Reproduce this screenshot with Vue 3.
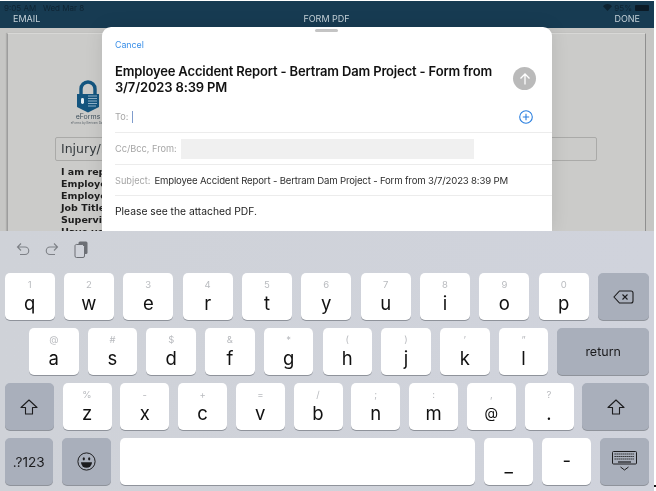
<script setup>
const rows = [
  {
    cls: 'row-one',
    keys: [
      { w: 50, hint: '1', label: 'q' }, { w: 50, hint: '2', label: 'w' }, { w: 50, hint: '3', label: 'e' },
      { w: 50, hint: '4', label: 'r' }, { w: 50, hint: '5', label: 't' }, { w: 50, hint: '6', label: 'y' },
      { w: 50, hint: '7', label: 'u' }, { w: 50, hint: '8', label: 'i' }, { w: 50, hint: '9', label: 'o' },
      { w: 50, hint: '0', label: 'p' }, { w: 51, icon: 'delete' }
    ]
  },
  {
    cls: 'row-two',
    keys: [
      { w: 49.5, hint: '@', label: 'a' }, { w: 49.5, hint: '#', label: 's' }, { w: 49.5, hint: '$', label: 'd' },
      { w: 49.5, hint: '&', label: 'f' }, { w: 49.5, hint: '*', label: 'g' }, { w: 49.5, hint: '(', label: 'h' },
      { w: 49.5, hint: ')', label: 'j' }, { w: 49.5, hint: '’', label: 'k' }, { w: 49.5, hint: '”', label: 'l' },
      { w: 91.4, text: 'return' }
    ]
  },
  {
    cls: 'row-three',
    keys: [
      { w: 49.2, icon: 'shift' }, { w: 49, hint: '%', label: 'z' }, { w: 49, hint: '-', label: 'x' },
      { w: 49, hint: '+', label: 'c' }, { w: 49, hint: '=', label: 'v' }, { w: 49, hint: '/', label: 'b' },
      { w: 49, hint: ';', label: 'n' }, { w: 49, hint: ':', label: 'm' }, { w: 49, hint: ',', label: '@', small: true },
      { w: 49, hint: '?', label: '.' }, { w: 67, icon: 'shift' }
    ]
  },
  {
    cls: 'row-four',
    keys: [
      { w: 48.4, text: '.?123', wide: true }, { w: 49, icon: 'emoji' }, { w: 355, blank: true },
      { w: 49.4, label: '_', low: true }, { w: 49, label: '-', mid: true }, { w: 49, icon: 'keyboard' }
    ]
  }
]
const docLines = ['I am reporting', 'Employee Name:', 'Employee ID:', 'Job Title:', 'Supervisor:', 'Have you']
</script>

<template>
  <div class="app">
    <div class="screen">
      <header class="topbar">
        <div class="status">
          <span class="status-left">9:05 AM&nbsp;&nbsp;&nbsp;Wed Mar 8</span>
          <span class="status-right">
            <svg width="9" height="7" viewBox="0 0 18 14"><path d="M9 14 0 4.5C5-1.2 13-1.2 18 4.5Z" fill="#0d2231"/></svg>
            <span>95%</span>
            <span class="battery"></span>
          </span>
        </div>
        <nav class="nav">
          <span>EMAIL</span>
          <span class="nav-title">FORM PDF</span>
          <span class="nav-done">DONE</span>
        </nav>
      </header>

      <main class="doc">
        <div class="page">
          <div class="logo">
            <svg width="24" height="33" viewBox="0 0 24 33">
              <path d="M5 14V9a7 7 0 0 1 14 0v5" fill="none" stroke="#14557f" stroke-width="3.4"/>
              <path d="M1 14h22v13l-11 5.5L1 27Z" fill="#14557f"/>
              <rect x="5" y="18" width="3" height="6" rx="1.4" fill="#e3edf3"/>
              <path d="M12 16h9M12 18.500h9M12 21h9M12 23.500h9M12 26h8" stroke="#8fb2c9" stroke-width="1"/>
            </svg>
            <span class="logo-name">eForms</span>
            <span class="logo-tag">eForms by Bertram Dam</span>
          </div>
          <div class="field">Injury/Near Miss</div>
          <div class="doc-lines">
            <div v-for="line in docLines" :key="line">{{ line }}</div>
          </div>
        </div>
      </main>

      <section class="keyboard">
        <div class="tools">
          <svg width="14" height="14" viewBox="0 0 14 14" fill="none" stroke="#7d8086" stroke-width="1.1">
            <path d="M5 1.500 1.500 5 5 8.500M1.500 5H9a3.700 3.700 0 0 1 0 7.500H4"/>
          </svg>
          <svg width="14" height="14" viewBox="0 0 14 14" fill="none" stroke="#7d8086" stroke-width="1.1">
            <path d="M9 1.500 12.500 5 9 8.500M12.500 5H5a3.700 3.700 0 0 0 0 7.500h5"/>
          </svg>
          <svg width="14" height="17" viewBox="0 0 14 17" fill="none">
            <rect x="4.500" y="0.500" width="9" height="12.500" rx="1.500" fill="#6c6f75"/>
            <path d="M3 3.500h5.500l2 2V15a1.500 1.500 0 0 1-1.500 1.500H2.500A1.500 1.500 0 0 1 1 15V5a1.500 1.500 0 0 1 2-1.500Z" fill="#d0d3da" stroke="#6c6f75" stroke-width="1"/>
          </svg>
        </div>
        <div v-for="row in rows" :key="row.cls" class="kb-row" :class="row.cls">
          <div
            v-for="(key, i) in row.keys"
            :key="i"
            class="key"
            :class="{ dark: key.icon || key.text }"
            :style="{ width: key.w + 'px' }"
          >
            <template v-if="key.label">
              <span class="hint">{{ key.hint }}</span>
              <span class="letter" :class="{ small: key.small, low: key.low, mid: key.mid }">{{ key.label }}</span>
            </template>
            <span v-else-if="key.text" class="key-text" :class="{ wide: key.wide }">{{ key.text }}</span>
            <svg v-else-if="key.icon === 'delete'" width="21" height="14" viewBox="0 0 21 14" fill="none" stroke="#1c1c1e" stroke-width="1.100">
              <path d="M6.500 1H18a2 2 0 0 1 2 2v8a2 2 0 0 1-2 2H6.500L1 7Z"/>
              <path d="m9.500 4.500 5 5m0-5-5 5"/>
            </svg>
            <svg v-else-if="key.icon === 'shift'" width="18" height="16" viewBox="0 0 18 16" fill="none" stroke="#1c1c1e" stroke-width="1.100">
              <path d="M9 1 1 8.500h4.500V15h7V8.500H17Z" stroke-linejoin="round"/>
            </svg>
            <svg v-else-if="key.icon === 'emoji'" width="19" height="19" viewBox="0 0 19 19">
              <circle cx="9.500" cy="9.500" r="8.600" fill="none" stroke="#1c1c1e" stroke-width="1"/>
              <ellipse cx="6.800" cy="6.800" rx="1.100" ry="1.600" fill="#1c1c1e"/>
              <ellipse cx="12.200" cy="6.800" rx="1.100" ry="1.600" fill="#1c1c1e"/>
              <path d="M4 10.300h11a5.500 5.500 0 0 1-11 0Z" fill="#1c1c1e"/>
            </svg>
            <svg v-else-if="key.icon === 'keyboard'" width="25" height="21" viewBox="0 0 25 21" fill="none">
              <rect x="0.500" y="0.500" width="24" height="12.500" rx="1" stroke="#1c1c1e"/>
              <path d="M2.500 3h20M2.500 5.500h20M2.500 8h20" stroke="#1c1c1e" stroke-width="1.200" stroke-dasharray="1.300 .7"/>
              <path d="M6 11h13" stroke="#1c1c1e" stroke-width="1.200"/>
              <path d="m8.500 16 4 3 4-3" stroke="#1c1c1e"/>
            </svg>
          </div>
        </div>
      </section>

      <section class="sheet">
        <div class="grabber"></div>
        <a class="cancel">Cancel</a>
        <div class="title-row">
          <h1>Employee Accident Report - Bertram Dam Project - Form from 3/7/2023 8:39 PM</h1>
          <span class="send">
            <svg width="12" height="12" viewBox="0 0 12 12" fill="none" stroke="#fff" stroke-width="1.300">
              <path d="M6 11.500V1M1.500 5.500 6 1l4.500 4.500"/>
            </svg>
          </span>
        </div>
        <div class="mail-row to-row">
          <span class="label">To:</span>
          <span class="caret"></span>
          <svg class="plus" width="14" height="14" viewBox="0 0 14 14" fill="none" stroke="#2a7fdf" stroke-width="1.100">
            <circle cx="7" cy="7" r="6.300"/>
            <path d="M7 3.800v6.400M3.800 7h6.400"/>
          </svg>
        </div>
        <div class="mail-row cc-row">
          <span class="label">Cc/Bcc, From:</span>
          <span class="from-box"></span>
        </div>
        <div class="mail-row subject-row">
          <span class="label">Subject:</span>
          <span class="subject">Employee Accident Report - Bertram Dam Project - Form from 3/7/2023 8:39 PM</span>
        </div>
        <p class="body-text">Please see the attached PDF.</p>
      </section>

      <span class="speck"></span>
    </div>
  </div>
</template>

<style>
html, body { margin: 0; background: #fff; }
</style>

<style scoped>
.app {
  width: 656px;
  height: 491px;
  overflow: hidden;
  background: #fff;
  padding-top: 1px;
  box-sizing: border-box;
  font-family: Inter, "Liberation Sans", sans-serif;
}
.screen {
  position: relative;
  width: 654px;
  height: 490px;
  display: flex;
  flex-direction: column;
  filter: blur(0.45px);
}
.topbar {
  height: 27px;
  flex: none;
  background: #173b52;
  display: flex;
  flex-direction: column;
}
.status {
  height: 11px;
  display: flex;
  justify-content: space-between;
  align-items: center;
  padding: 1px 5px 0 4px;
  font-size: 8px;
  color: #0e2332;
}
.status-right { display: flex; align-items: center; gap: 2px; }
.battery { width: 14px; height: 6px; background: #0b1a26; border-radius: 1px; margin-left: 1px; }
.nav {
  display: grid;
  grid-template-columns: 1fr auto 1fr;
  padding: 0 14px 0 13px;
  font-size: 9px;
  line-height: 12px;
  color: #c5d1d8;
}
.nav-done { text-align: right; }
.doc {
  flex: 1;
  min-height: 0;
  overflow: hidden;
  background: #c6c6c4;
  padding: 5px 8px 0 7px;
}
.page {
  height: 300px;
  background: #cbcbc9;
  border-left: 1px solid #9d9d9d;
  border-right: 1px solid #8f8f8f;
  border-top: 1px solid #d8d8d6;
  padding-top: 46px;
  box-shadow: -1px 0 1px rgba(0, 0, 0, .12);
}
.logo {
  display: flex;
  flex-direction: column;
  align-items: center;
  width: 40px;
  margin-left: 60px;
}
.logo-name { font-size: 7px; line-height: 8px; color: #41525e; }
.logo-tag { font-size: 3px; line-height: 4px; color: #5d666d; white-space: nowrap; }
.field {
  box-sizing: border-box;
  margin: 12px 0 0 47px;
  width: 542px;
  height: 24px;
  border: 1px solid #aaaaa8;
  border-radius: 2px;
  font-family: "DejaVu Sans", sans-serif;
  font-size: 12.500px;
  line-height: 22px;
  color: #33393d;
  padding-left: 5px;
}
.doc-lines {
  margin: 5px 0 0 53px;
  font-family: "DejaVu Sans", sans-serif;
  font-weight: 700;
  font-size: 9.500px;
  line-height: 12px;
  color: #1d1d1d;
}
.sheet {
  position: absolute;
  z-index: 1;
  left: 102.400px;
  top: 26px;
  width: 449.300px;
  height: 204px;
  background: #fff;
  border-radius: 9px 9px 0 0;
  box-shadow: 0 0 18px rgba(0, 0, 0, .1);
  padding-left: 12.600px;
  box-sizing: border-box;
  display: flex;
  flex-direction: column;
  overflow: hidden;
}
.grabber {
  width: 23px;
  height: 3px;
  border-radius: 2px;
  background: #c4c4c4;
  margin: 2px 0 0 200px;
  flex: none;
}
.cancel {
  margin-top: 7px;
  font-size: 8.800px;
  line-height: 12px;
  color: #3a8fe8;
}
.title-row {
  display: flex;
  align-items: flex-start;
  margin-top: 11px;
  height: 38px;
  flex: none;
}
h1 {
  margin: 1px 0 0;
  width: 385px;
  font-size: 13px;
  letter-spacing: -0.16px;
  line-height: 16px;
  font-weight: 600;
  color: #111;
}
.send {
  width: 23px;
  height: 23px;
  border-radius: 50%;
  background: #bababa;
  margin: 5px 0 0 13.500px;
  display: flex;
  align-items: center;
  justify-content: center;
}
.mail-row {
  display: flex;
  align-items: center;
  border-bottom: 1px solid #ececec;
  flex: none;
  font-size: 9.200px;
}
.label { color: #a6a6a6; }
.to-row { height: 33px; padding-top: 1px; box-sizing: border-box; }
.caret { width: 1px; height: 12px; background: #7f9ccc; margin-left: 4px; }
.plus { margin-left: auto; margin-right: 19px; }
.cc-row { height: 32px; box-sizing: border-box; }
.from-box { width: 293px; height: 20px; background: #f0f0f0; margin-left: 4px; }
.subject-row { height: 31px; box-sizing: border-box; }
.subject { color: #2e2e2e; margin-left: 4px; font-size: 9.600px; letter-spacing: -0.17px; white-space: nowrap; }
.body-text { margin: 8px 0 0; font-size: 10.300px; line-height: 14px; color: #1c1c1c; }
.keyboard {
  position: relative;
  z-index: 2;
  flex: none;
  height: 260px;
  box-sizing: border-box;
  background: linear-gradient(90deg, #cfd2d8, #d0d3dc);
  display: flex;
  flex-direction: column;
  gap: 8px;
}
.tools {
  height: 34px;
  flex: none;
  box-sizing: border-box;
  padding: 2px 0 0 15.500px;
  display: flex;
  align-items: center;
  gap: 15px;
}
.kb-row { display: flex; height: 47px; flex: none; }
.row-one { padding-left: 4.600px; gap: 9.350px; }
.row-two { padding-left: 29px; gap: 9.230px; }
.row-three { padding-left: 4.600px; gap: 8.750px; }
.row-four { padding-left: 4.600px; gap: 9px; }
.key {
  position: relative;
  flex: none;
  height: 47px;
  background: #fff;
  border-radius: 5px;
  box-shadow: 0 1px 0 #8f939b;
  display: flex;
  align-items: center;
  justify-content: center;
  color: #111;
}
.key.dark { background: #a9afbb; }
.hint {
  position: absolute;
  top: 5px;
  left: 0;
  right: 0;
  text-align: center;
  font-size: 9.500px;
  line-height: 13px;
  color: #b9bbbf;
}
.letter {
  position: absolute;
  top: 18px;
  left: 0;
  right: 0;
  text-align: center;
  font-size: 18.500px;
  line-height: 24px;
  font-weight: 400;
}
.letter.small { font-size: 14px; }
.letter.low { top: 15px; }
.letter.mid { top: 10px; }
.key-text { font-size: 12.500px; color: #1c1c1e; }
.key-text.wide { font-size: 13.600px; }
.speck {
  position: absolute;
  left: 654px;
  top: 484px;
  width: 2px;
  height: 2px;
  background: #111;
}
</style>
